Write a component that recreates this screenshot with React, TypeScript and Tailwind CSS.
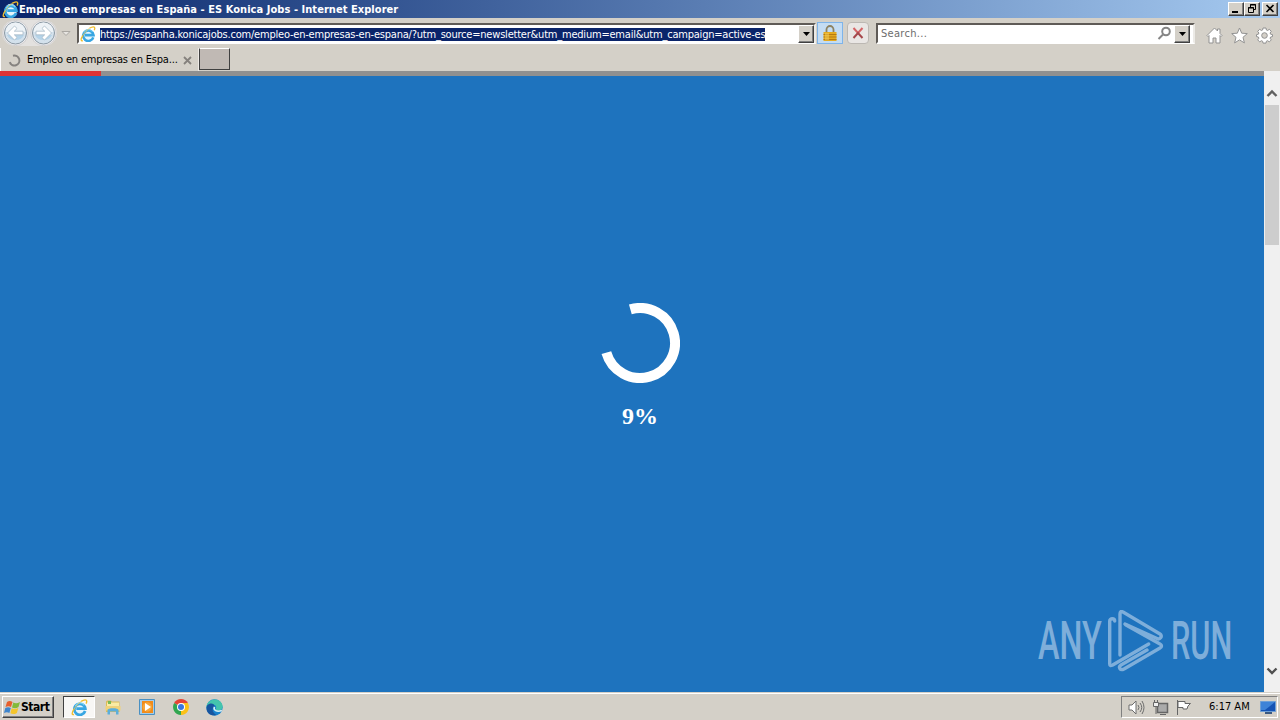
import React from 'react';

const ui = "font-['DejaVu_Sans_Condensed','DejaVu_Sans',sans-serif]";
const raised = 'border border-t-white border-l-white border-r-[#404040] border-b-[#404040] bg-[#d4d0c8] shadow-[inset_-1px_-1px_0_#808080]';

const IeIcon = ({ size }: { size: number }) => (
  <svg width={size} height={size} viewBox="0 0 16 16" fill="none" className="shrink-0">
    <ellipse cx="8.3" cy="8.700" rx="5.800" ry="6" fill="#e4f5fc" />
    <path d="M13.300 11.300A5.200 5.200 0 1 1 13.500 9.100H5" stroke="#38a6e2" strokeWidth="2.600" />
    <path d="M12.500 5.800A5 5 0 0 0 4 6.500" stroke="#7cd3f6" strokeWidth="1" />
    <path d="M2.800 14.600C.6 15.400.5 12.800 3 9.300M9.500 2.300C12.500.5 14.700.400 14.800 2c0 .8-.2 1.500-.6 2.300" stroke="#f0bd2c" strokeWidth="1.300" />
    <path d="M3 9.300C4.800 6.500 7 4 9.500 2.300" stroke="#f3cd55" strokeWidth=".8" />
  </svg>
);

const NavArrow = ({ forward }: { forward?: boolean }) => (
  <svg width="27" height="26" viewBox="0 0 27 26" className="shrink-0">
    <circle cx="13.500" cy="13" r="12.700" fill="#ececee" stroke="#c2c0c0" strokeWidth=".6" />
    <circle cx="13.500" cy="13" r="11" fill="#d3e1ec" stroke="#8b98a3" />
    <path d="M3.500 12a10 9.500 0 0 1 20 0z" fill="#edf2f6" />
    <path d="M5 15a9 7.500 0 0 0 17 0z" fill="#b5d3e8" />
    <path
      d="M5.500 13l7-7 2.600 2.500-2.800 2.700H21v3.600h-8.700l2.800 2.700-2.600 2.500z"
      transform={forward ? 'rotate(180 13.5 13)' : undefined}
      fill="#fff"
      stroke="#9fb3c2"
      strokeWidth=".7"
    />
  </svg>
);

const DropButton = ({ className = '' }: { className?: string }) => (
  <button className={`${raised} flex w-4 h-[18px] shrink-0 items-center justify-center ${className}`}>
    <svg width="7" height="4" viewBox="0 0 7 4"><path d="M0 0h7L3.500 4z" /></svg>
  </button>
);

const TitleBar = () => (
  <div className="flex h-[18px] items-center bg-linear-to-r from-[#0a246a] to-[#a6caf0] pl-[2px] pr-[2px]">
    <IeIcon size={17} />
    <span className="flex-1 whitespace-pre pt-px text-[11px] font-bold leading-[17px] text-white tracking-[0.05px]">
      Empleo en empresas en España - ES Konica Jobs - Internet Explorer
    </span>
    <div className="flex">
      <button className={`${raised} h-[14px] w-4`}>
        <svg width="14" height="12"><path d="M3 8h6v2H3z" /></svg>
      </button>
      <button className={`${raised} h-[14px] w-4`}>
        <svg width="14" height="12" fill="none" stroke="#000"><path d="M5.500 4V1.500h5v5H9M5 2h6M3.500 4.500h5v5h-5zM3 5h6" /></svg>
      </button>
      <button className={`${raised} ml-[2px] h-[14px] w-4`}>
        <svg width="14" height="12" stroke="#000" strokeWidth="1.600"><path d="M3.500 2l7 7M10.500 2l-7 7" /></svg>
      </button>
    </div>
  </div>
);

const AddressRow = () => (
  <div className="flex h-[30px] items-start pt-[2px]">
    <div className="flex gap-px rounded-full bg-[#e3e1df] ml-[2px]">
      <NavArrow />
      <NavArrow forward />
    </div>
    <svg width="20" height="28" fill="none" stroke="#aaa7a2"><path d="M5 11.500h8l-4 4z" fill="#e7e5e1" /></svg>
    <div className="mt-[3px] flex h-[21px] w-[739px] items-center border-2 border-t-[#5f5b57] border-l-[#5f5b57] border-r-[#eceae6] border-b-white bg-white pl-px">
      <IeIcon size={16} />
      <div className="ml-1 flex-1">
        <span className="inline-block h-[13px] whitespace-pre bg-[#0a246a] align-middle text-[11px] leading-[13px] text-white tracking-[-0.21px]">
          https://espanha.konicajobs.com/empleo-en-empresas-en-espana/?utm_source=newsletter&amp;utm_medium=email&amp;utm_campaign=active-es
        </span>
      </div>
      <DropButton />
    </div>
    <div className="ml-px mt-[2px] flex h-[22px] w-[26px] items-center justify-center border border-[#7eb4ea] bg-[#c4dcf3]">
      <svg width="14" height="16" viewBox="0 0 14 16">
        <path d="M3.500 8V4.500a3.500 3.500 0 0 1 7 0V8" fill="none" stroke="#8d8262" strokeWidth="1.800" />
        <path d="M.5 7h13v9H.5z" fill="#e5aa20" />
        <path d="M.5 9.500h13M.5 12h13M.5 14.500h13" stroke="#b77b12" />
        <path d="M2 8h4v7H2z" fill="#f6d25d" opacity=".5" />
      </svg>
    </div>
    <div className="ml-1 mt-[2px] flex h-[22px] w-[22px] items-center justify-center rounded-sm border border-[#bcb8b3] bg-[#e9e6e4]">
      <svg width="12" height="12" strokeWidth="2"><path d="M1.500 1L6 6l4.500-5" fill="none" stroke="#d56567" /><path d="M1.500 11L6 6l4.500 5" fill="none" stroke="#a5474b" /></svg>
    </div>
    <div className="ml-[7px] mt-[3px] flex h-[21px] w-[319px] items-center border-2 border-t-[#5f5b57] border-l-[#5f5b57] border-r-[#eceae6] border-b-white bg-white pl-[3px]">
      <span className="flex-1 pt-px text-[11px] leading-[16px] text-[#6d6d6d] tracking-[0.3px]">Search...</span>
      <svg width="15" height="15" className="mr-[2px]" fill="none" stroke="#858585" strokeWidth="2"><circle cx="9" cy="5.500" r="3.800" /><path d="M6 8.500l-4.500 4.500" /></svg>
      <DropButton className="mr-[3px]" />
    </div>
    <div className="ml-[11px] mt-[7px] flex gap-2">
      <svg width="17" height="17" viewBox="0 0 17 17" fill="#fff" stroke="#929292"><path d="M1 8.500L8.500 1l3 3V2h2.500v4.500L16 8.500l-1 1-1-1V16h-4v-5H7v5H3V8.500l-1 1z" /></svg>
      <svg width="17" height="17" viewBox="0 0 17 17" fill="#fff" stroke="#929292"><path d="M8.500 1l2.200 5.200 5.600.400-4.300 3.700 1.400 5.600-4.900-3-4.900 3L5 10.300.700 6.600l5.600-.400z" /></svg>
      <svg width="17" height="17" viewBox="0 0 17 17" fill="#fff" stroke="#929292">
        <path d="M7 1h3l.4 2 1.200.5 1.700-1.200 2 2-1.200 1.700.5 1.200 1.900.4v2l-1.900.4-.5 1.200 1.200 1.700-2 2-1.700-1.200-1.200.5-.4 1.900H7l-.4-1.900-1.200-.5-1.700 1.200-2-2 1.200-1.700-.5-1.200-1.900-.4v-2l1.900-.4.5-1.200-1.200-1.700 2-2 1.700 1.200L6.600 3z" />
        <circle cx="8.500" cy="8.500" r="2.800" fill="#d4d0c8" />
      </svg>
    </div>
  </div>
);

const TabRow = () => (
  <div className="flex h-[23px]">
    <div className="flex h-[23px] w-[199px] items-center border-r border-r-[#eeeae6] border-l border-l-white pl-[7px] pt-px">
      <svg width="13" height="13" fill="none" stroke="#85827f" strokeWidth="2"><path d="M5 1.700a5 5 0 1 1-3.300 6.500" /></svg>
      <span className="ml-[6px] w-[156px] whitespace-nowrap pt-px text-[11px] tracking-[-0.18px] text-black">Empleo en empresas en Espa...</span>
      <svg width="9" height="9" stroke="#85817d" strokeWidth="1.800"><path d="M1 1l7 7M8 1L1 8" /></svg>
    </div>
    <div className="h-[22px] w-[31px] border border-t-white border-l-[#404040] border-r-[#404040] border-b-[#404040] bg-[#c0b9b4]" />
  </div>
);

const Watermark = () => (
  <div className="absolute bottom-[20px] right-[32px] flex h-[62px] w-[194px] items-center justify-between text-[#8fb9e0] opacity-85">
    <span className="w-[63px] font-['Roboto',sans-serif] text-[53px] font-medium leading-[62px]">
      <span className="inline-block origin-left scale-x-[0.61]">ANY</span>
    </span>
    <svg width="56" height="62" viewBox="0 0 56 62" fill="none" stroke="currentColor" strokeWidth="3.400" strokeLinejoin="round" strokeLinecap="round" className="absolute left-[70px]">
      <path d="M6.700 11c0-3-5-3-5 0v43c0 2 1 2 3 1l36-21" />
      <path d="M12 45V4c0-2.500 1-3 3-2l37 22c3 2 0 6-3 4.500L17 14" />
      <path d="M18 15l34 19c2 1 2 3 0 4L16 59c-4 2-6-2-3-4l26-15" />
    </svg>
    <span className="w-[61px] font-['Roboto',sans-serif] text-[53px] font-medium leading-[62px]">
      <span className="inline-block origin-left scale-x-[0.58]">RUN</span>
    </span>
  </div>
);

const Page = () => (
  <main className="relative flex flex-1 flex-col bg-[#1e73be]">
    <div className="h-[5px] shrink-0 bg-[#909090]">
      <div className="h-full w-[101px] bg-[#dd3333]" />
    </div>
    <div className="flex flex-1 flex-col items-center pl-4 pt-[227px]">
      <svg width="80" height="80" viewBox="0 0 80 80" fill="none">
        <circle cx="40" cy="40" r="35" stroke="#fff" strokeWidth="10" pathLength="100" strokeDasharray="75 25" transform="rotate(-106 40 40)" />
      </svg>
      <p className="mt-[19px] font-['Liberation_Serif',serif] text-2xl font-bold leading-7 text-white">9%</p>
    </div>
    <Watermark />
  </main>
);

const Scrollbar = () => (
  <div className="flex w-4 flex-col items-center bg-[#f0f0f0]">
    <svg width="16" height="34" fill="none" stroke="#606060" strokeWidth="2.400"><path d="M3.500 25L8 20.500l4.500 4.500" /></svg>
    <div className="h-[140px] w-[14px] bg-[#cdcdcd]" />
    <svg width="16" height="40" className="mt-auto" fill="none" stroke="#505050" strokeWidth="2.400"><path d="M3.500 16.500L8 21l4.500-4.500" /></svg>
  </div>
);

const Taskbar = () => (
  <div className="flex h-7 items-center border-t border-t-[#d4d0c8] bg-[#d4d0c8] shadow-[inset_0_1px_0_#fff]">
    <button className={`${raised} ml-[2px] mt-px flex h-[22px] w-[52px] items-center`}>
      <svg width="17" height="17" viewBox="0 0 17 17" className="ml-px shrink-0">
        <path d="M3 3c2-1.500 4-1 5.500 0L7 8C5.500 7 3.500 7 1.500 8z" fill="#e65f2c" />
        <path d="M9.300 3.500c2 1 4 1 6.700-.5l-1.500 5c-2 1.500-4.500 1.500-6.500.500z" fill="#83ba3a" />
        <path d="M1.300 9c2-1.300 4-1 5.500 0l-1.400 5c-1.500-1-3.500-1-5.400 0z" fill="#3e85cd" />
        <path d="M7.700 9.300c2 1 4 1 6.600-.4l-1.400 5c-2.500 1.500-4.500 1.500-6.500.4z" fill="#f5c52b" />
      </svg>
      <span className="text-[12px] font-bold tracking-[-0.45px] text-black">Start</span>
    </button>
    <div className="ml-[9px] mt-px flex h-[22px] w-[32px] items-center justify-center border border-t-[#404040] border-l-[#404040] border-r-white border-b-white bg-[#f8f7f5]">
      <IeIcon size={17} />
    </div>
    <svg width="16" height="16" viewBox="0 0 16 16" className="ml-[10px] mt-px">
      <path d="M1 2.500C1 1 7 1 7 2.500h7.500V13H1z" fill="#dcbb57" />
      <path d="M2 3.500h12v7H2z" fill="#faeba4" />
      <path d="M3 2h3v3H3z" fill="#77b957" />
      <path d="M.5 7h15v4.500H.5z" fill="#f0d27a" />
      <path d="M2.500 15.500V11c0-2.500 11-2.500 11 0v4.500h-2.500v-3H5v3z" fill="#5baedb" />
    </svg>
    <svg width="17" height="16" viewBox="0 0 17 16" className="ml-[18px] mt-px">
      <path d="M.5.500h15v15H.5z" fill="#a4cce9" stroke="#4a90c2" />
      <path d="M3 2h11v12H3z" fill="#f18b1a" />
      <circle cx="8.300" cy="8" r="4.700" fill="#f7a63a" />
      <path d="M6 4l6 4-6 4z" fill="#fff" />
    </svg>
    <svg width="16" height="16" viewBox="0 0 16 16" className="ml-[17px] mt-px">
      <path d="M8 8L1.100 4a8 8 0 0 1 13.800 0z" fill="#e54335" />
      <path d="M8 8L1.100 4A8 8 0 0 0 8 16l3.500-6z" fill="#31a650" />
      <path d="M8 8l0 8A8 8 0 0 0 14.900 4H8z" fill="#fbc116" />
      <circle cx="8" cy="8" r="4" fill="#fff" />
      <circle cx="8" cy="8" r="3" fill="#3976df" />
    </svg>
    <svg width="17" height="17" viewBox="0 0 16 16" className="ml-[17px] mt-px">
      <circle cx="8" cy="8" r="7.700" fill="#1782ce" />
      <path d="M.4 7C2-2 15-1.500 15.700 7c0 4-5.700 5-6.700 3 2-3-1-5.500-4-4.500C2.500 6 1 8 .4 7z" fill="#44c4ad" />
      <path d="M1 6c3-3 7-2 7 1-3 2-2 6 2 8C3 17-1 11 1 6z" fill="#17559f" />
      <path d="M8 7.500c-1.500 3 2 5 7 3.300" fill="none" stroke="#d4eef5" strokeWidth="1.500" />
    </svg>
    <div className="ml-auto mr-[2px] mt-px flex h-[22px] w-[157px] items-center border border-t-[#808080] border-l-[#808080] border-r-white border-b-white">
      <svg width="17" height="17" viewBox="0 0 17 17" className="ml-[6px]" fill="none" stroke="#6c6c6c">
        <path d="M1 6h3l4-4v13l-4-4H1z" fill="#fff" />
        <path d="M10 6q2 2.500 0 5M12 4q3.500 4.500 0 9M14 2q4 6.500 0 13" />
      </svg>
      <svg width="17" height="17" viewBox="0 0 17 17" className="ml-[7px]" fill="#eee" stroke="#666">
        <path d="M5.500 4.500h10v9h-10z" fill="#aaa" strokeWidth="1.500" />
        <path d="M8 15.500h6" />
        <path d="M1.500 3.500h5v4h-5zM2.500 1v2.500M5.500 1v2.500M4 8v7" />
      </svg>
      <svg width="17" height="17" viewBox="0 0 17 17" className="ml-[7px]" fill="#fff" stroke="#666"><path d="M1.500 1v15M2 2.500h7v2h5.500L12 7l-1 3H7V8.500H2z" /></svg>
      <span className="ml-[16px] w-[43px] whitespace-nowrap pt-px text-[11px] tracking-[0px] text-black">6:17 AM</span>
      <svg width="17" height="15" viewBox="0 0 17 15" className="ml-[8px]">
        <path d="M.5 1.500h15v10H.5z" fill="#1553b4" stroke="#6d9fd6" />
        <path d="M1 2h14L5 10H1z" fill="#3e83d7" />
        <path d="M5 12h7v2H5z" fill="#3b5981" />
      </svg>
    </div>
  </div>
);

export default function App() {
  return (
    <div className={`${ui} flex h-[720px] w-[1280px] flex-col overflow-hidden bg-[#d4d0c8]`}>
      <TitleBar />
      <AddressRow />
      <TabRow />
      <div className="flex min-h-0 flex-1">
        <Page />
        <Scrollbar />
      </div>
      <Taskbar />
    </div>
  );
}
